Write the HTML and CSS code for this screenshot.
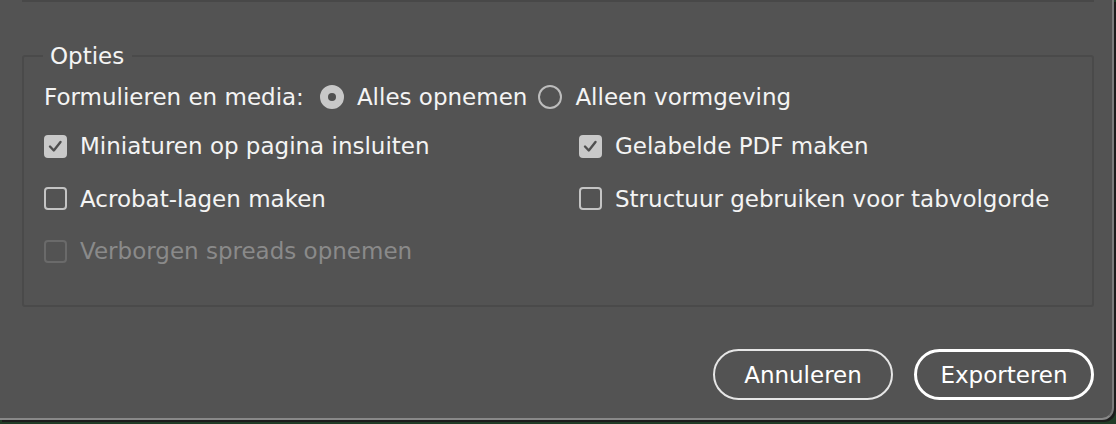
FILE: index.html
```html
<!DOCTYPE html>
<html lang="nl">
<head>
<meta charset="utf-8">
<title>Opties</title>
<link rel="stylesheet" href="styles.css">
</head>
<body>
<div class="window">
  <div class="prev-box"></div>
  <fieldset class="group">
    <legend class="group-title">Opties</legend>
    <div class="radio-row">
      <span class="field-label">Formulieren en media:</span>
      <label class="opt"><span class="radio checked"></span>Alles opnemen</label>
      <label class="opt"><span class="radio"></span>Alleen vormgeving</label>
    </div>
    <div class="check-grid">
      <label class="opt"><span class="check checked"><svg viewBox="0 0 23 23" width="23" height="23"><polyline points="6,11.5 9.8,15.5 16.5,7" fill="none" stroke="#4f4f4f" stroke-width="2.4" stroke-linecap="round" stroke-linejoin="round"/></svg></span>Miniaturen op pagina insluiten</label>
      <label class="opt"><span class="check checked"><svg viewBox="0 0 23 23" width="23" height="23"><polyline points="6,11.5 9.8,15.5 16.5,7" fill="none" stroke="#4f4f4f" stroke-width="2.4" stroke-linecap="round" stroke-linejoin="round"/></svg></span>Gelabelde PDF maken</label>
      <label class="opt"><span class="check"></span>Acrobat-lagen maken</label>
      <label class="opt"><span class="check"></span>Structuur gebruiken voor tabvolgorde</label>
      <label class="opt disabled"><span class="check"></span>Verborgen spreads opnemen</label>
    </div>
  </fieldset>
  <div class="actions">
    <button class="btn">Annuleren</button>
    <button class="btn primary">Exporteren</button>
  </div>
</div>
</body>
</html>
```
FILE: styles.css
```css
html, body {
  margin: 0;
  padding: 0;
}
body {
  width: 1116px;
  height: 424px;
  overflow: hidden;
  background: #213c27;
  font-family: "DejaVu Sans", "Noto Sans", sans-serif;
}
.window {
  box-sizing: border-box;
  width: 1114px;
  height: 420px;
  background: #535353;
  border-right: 2px solid #7b7b7b;
  border-bottom: 2px solid #888888;
  border-bottom-right-radius: 12px;
  box-shadow: 2px 2px 0 #1c1c1c;
  padding: 0 18px 0 22px;
  display: flex;
  flex-direction: column;
  color: #f4f4f4;
  font-size: 23px;
}
.prev-box {
  height: 0;
  border-bottom: 2px solid #484848;
}
.group {
  margin: 40px 0 0;
  padding: 14px 0 41px 20px;
  border: 2px solid #4a4a4a;
  border-radius: 3px;
  min-width: 0;
}
.group-title {
  margin-left: -1px;
  padding: 0 8px 0 7px;
  line-height: 28px;
}
.radio-row {
  display: flex;
  align-items: center;
  height: 26px;
  line-height: 26px;
  margin-bottom: 23px;
}
.field-label {
  margin-right: 16px;
}
.opt {
  display: flex;
  align-items: center;
  gap: 13px;
  white-space: nowrap;
  line-height: 26px;
}
.radio-row .opt {
  margin-right: 11px;
}
.radio {
  width: 24px;
  height: 24px;
  box-sizing: border-box;
  border-radius: 50%;
  border: 2px solid #bdbdbd;
  flex: none;
}
.radio.checked {
  background: #c8c8c8;
  border-color: #c8c8c8;
  display: flex;
  align-items: center;
  justify-content: center;
}
.radio.checked::after {
  content: "";
  width: 8px;
  height: 8px;
  border-radius: 50%;
  background: #505050;
}
.check-grid {
  display: grid;
  grid-template-columns: 535px 1fr;
  row-gap: 26.5px;
}
.check-grid .opt {
  height: 26px;
}
.check {
  width: 23px;
  height: 23px;
  box-sizing: border-box;
  border: 2px solid #c4c4c4;
  border-radius: 4px;
  flex: none;
  position: relative;
}
.check.checked {
  background: #c9c9c9;
  border-color: #c9c9c9;
}
.check svg {
  display: block;
  margin: -2px;
}
.disabled {
  color: #8a8a8a;
}
.disabled .check {
  border-color: #6a6a6a;
}
.actions {
  display: flex;
  justify-content: flex-end;
  gap: 21px;
  margin-top: 42px;
}
.btn {
  font: inherit;
  color: #ffffff;
  background: transparent;
  width: 180px;
  height: 51px;
  border: 2px solid #e6e6e6;
  border-radius: 26px;
  padding: 0;
}
.btn.primary {
  border: 3px solid #ffffff;
}
```
